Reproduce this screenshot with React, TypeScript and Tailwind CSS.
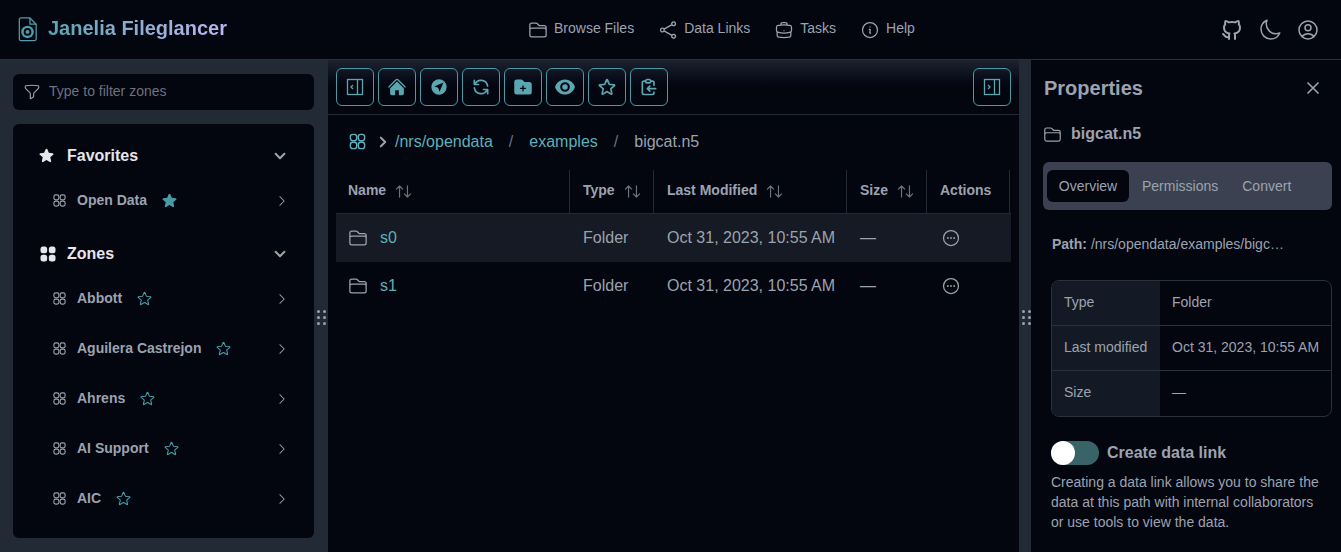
import {
  HiOutlineFolder,
  HiOutlineShare,
  HiOutlineBriefcase,
  HiOutlineInformationCircle,
  HiOutlineMoon,
  HiOutlineUserCircle,
  HiOutlineStar,
  HiStar,
  HiHome,
  HiFolderPlus,
  HiEye,
  HiChevronDown,
  HiChevronRight,
  HiOutlineFunnel,
  HiOutlineXMark,
  HiOutlineEllipsisHorizontalCircle,
} from 'react-icons/hi2'
import { HiOutlineClipboardCopy, HiOutlineRefresh } from 'react-icons/hi'
import { TbBrandGithub, TbArrowsSort } from 'react-icons/tb'

const zones = ['Abbott', 'Aguilera Castrejon', 'Ahrens', 'AI Support', 'AIC']

function GridIcon({ className, solid }: { className?: string; solid?: boolean }) {
  const props = solid
    ? { fill: 'currentColor' }
    : { fill: 'none', stroke: 'currentColor', strokeWidth: 1.8 }
  return (
    <svg viewBox="0 0 24 24" className={className} {...props}>
      <rect x="3" y="3" width="8" height="8" rx="3" />
      <rect x="13" y="3" width="8" height="8" rx="3" />
      <rect x="3" y="13" width="8" height="8" rx="3" />
      <rect x="13" y="13" width="8" height="8" rx="3" />
    </svg>
  )
}

function SidebarToggleIcon({ side }: { side: 'left' | 'right' }) {
  return (
    <svg viewBox="0 0 18 18" className="h-[18px] w-[18px]" fill="none" stroke="currentColor" strokeWidth="1.3">
      <rect x="1.5" y="1.5" width="15" height="15" />
      <path d="M11.5 1.5v15" />
      {side === 'left' ? <path d="M7 7l-2 2 2 2" /> : <path d="M5 7l2 2-2 2" />}
    </svg>
  )
}

function NavigateIcon() {
  return (
    <svg viewBox="0 0 20 20" className="h-[18px] w-[18px]" fill="currentColor">
      <path
        fillRule="evenodd"
        d="M10 1.5a8.500 8.500 0 1 0 0 17 8.500 8.500 0 0 0 0-17Zm5 3.500L4.800 9.400l4.300 1.500 1.500 4.300L15 5Z"
        clipRule="evenodd"
      />
    </svg>
  )
}

function Grip() {
  return (
    <div className="grid w-[9px] grid-cols-2 gap-x-[3px] gap-y-[3px]">
      {[0, 1, 2, 3, 4, 5].map((i) => (
        <span key={i} className="h-[3px] w-[3px] rounded-full bg-[#9ca3af]" />
      ))}
    </div>
  )
}

function ToolButton({ children }: { children: React.ReactNode }) {
  return (
    <button
      type="button"
      className="flex h-[38px] w-[38px] items-center justify-center rounded-md border border-[#4a9aa5] text-[#5aa7b2]"
    >
      {children}
    </button>
  )
}

function NavLink({ icon, label }: { icon: React.ReactNode; label: string }) {
  return (
    <a className="flex items-center gap-[6px] text-[14px] text-[#9ca3af]">
      <span className="text-[#9ca3af]">{icon}</span>
      <span className="-mt-[3px]">{label}</span>
    </a>
  )
}

function ZoneRow({ label, starred }: { label: string; starred?: boolean }) {
  return (
    <div className="flex h-[50px] items-center pl-[39px] pr-[25px]">
      <GridIcon className="h-[15px] w-[15px] text-[#9ca3af]" />
      <span className="ml-[10px] text-[14px] font-bold text-[#9ca3af]">{label}</span>
      {starred ? (
        <HiStar className="ml-[14px] h-[17px] w-[17px] text-[#4a9aa5]" />
      ) : (
        <HiOutlineStar className="ml-[14px] h-[17px] w-[17px] text-[#4a9aa5]" />
      )}
      <HiChevronRight className="ml-auto h-[14px] w-[14px] text-[#9ca3af]" />
    </div>
  )
}

function SectionRow({ icon, label }: { icon: React.ReactNode; label: string }) {
  return (
    <div className="flex h-[46px] items-center pl-[25px] pr-[27px]">
      {icon}
      <span className="text-[16px] font-bold text-[#e5e7eb]">{label}</span>
      <HiChevronDown className="ml-auto h-[14px] w-[14px] text-[#9ca3af]" strokeWidth={2} />
    </div>
  )
}

function HeaderCell({ label, width, pad, sort = true }: { label: string; width: string; pad: string; sort?: boolean }) {
  return (
    <div className={`flex h-[43px] items-center gap-2 border-r border-[#232a36] ${pad} ${width}`}>
      <span className="-mt-[3px] text-[14px] font-bold text-[#9ca3af]">{label}</span>
      {sort && <TbArrowsSort className="h-[19px] w-[19px] text-[#6b7280]" strokeWidth={1.5} />}
    </div>
  )
}

function FileRow({ name, active }: { name: string; active?: boolean }) {
  return (
    <div className={`flex h-[48px] items-center text-[16px] text-[#9ca3af] ${active ? 'bg-[#151a24]' : ''}`}>
      <div className="flex w-[234px] items-center gap-[12px] pl-[12px]">
        <HiOutlineFolder className="h-[20px] w-[20px]" />
        <span className="text-[#5fb0ba]">{name}</span>
      </div>
      <div className="w-[84px] pl-[13px]">Folder</div>
      <div className="w-[193px] pl-[13px]">Oct 31, 2023, 10:55 AM</div>
      <div className="w-[80px] pl-[13px]">—</div>
      <div className="pl-[14px]">
        <HiOutlineEllipsisHorizontalCircle className="h-[20px] w-[20px]" />
      </div>
    </div>
  )
}

function PropRow({ label, value, last }: { label: string; value: string; last?: boolean }) {
  return (
    <div className={`flex h-[45px] text-[14px] text-[#9ca3af] ${last ? '' : 'border-b border-[#2a303c]'}`}>
      <div className="flex w-[108px] items-center bg-[#141a25] pb-[2px] pl-[12px]">{label}</div>
      <div className="flex flex-1 items-center pb-[2px] pl-[12px]">{value}</div>
    </div>
  )
}

export default function App() {
  return (
    <div className="flex h-[552px] w-[1341px] flex-col overflow-hidden bg-[#03050f] font-['Liberation_Sans',sans-serif]">
      <header className="flex h-[60px] shrink-0 items-center border-b border-[#2a303c] pl-[18px] pr-[21px]">
        <div className="flex w-[510px] items-center gap-[10px]">
          <svg viewBox="0 0 20 26" className="h-[25px] w-[20px] text-[#4f9eaa]" fill="none" stroke="currentColor" strokeWidth="1.3">
            <path d="M2.500 1h9.500l6.500 6.500V23a1.500 1.500 0 0 1-1.500 1.500H2.500A1.500 1.500 0 0 1 1 23V2.500A1.500 1.500 0 0 1 2.500 1Z" />
            <path d="M12 1v6.500h6.500" />
            <circle cx="9.500" cy="15.500" r="6.500" fill="currentColor" stroke="none" />
            <circle cx="9.500" cy="15.500" r="4" fill="#03050f" stroke="none" />
            <circle cx="9.500" cy="15.500" r="2" fill="currentColor" stroke="none" />
          </svg>
          <span className="bg-gradient-to-r from-[#58a5b3] to-[#bdb6f2] bg-clip-text pb-[3px] text-[20px] font-bold text-transparent">
            Janelia Fileglancer
          </span>
        </div>
        <nav className="flex items-center gap-[24px]">
          <NavLink icon={<HiOutlineFolder className="h-5 w-5" />} label="Browse Files" />
          <NavLink icon={<HiOutlineShare className="h-5 w-5" />} label="Data Links" />
          <NavLink icon={<HiOutlineBriefcase className="h-5 w-5" />} label="Tasks" />
          <NavLink icon={<HiOutlineInformationCircle className="h-5 w-5" />} label="Help" />
        </nav>
        <div className="ml-auto flex items-center gap-[14px] text-[#9ca3af]">
          <TbBrandGithub className="h-[24px] w-[24px]" />
          <HiOutlineMoon className="h-[24px] w-[24px]" />
          <HiOutlineUserCircle className="h-[24px] w-[24px]" />
        </div>
      </header>

      <div className="flex min-h-0 flex-1">
        <aside className="relative flex w-[328px] shrink-0 flex-col gap-[14px] bg-[#222a36] py-[14px] pl-[13px] pr-[14px]">
          <div className="flex h-[36px] items-center gap-[8px] rounded-md bg-[#03050f] pl-[10px]">
            <HiOutlineFunnel className="h-[18px] w-[18px] text-[#9ca3af]" />
            <span className="-mt-[1px] text-[14px] text-[#6b7280]">Type to filter zones</span>
          </div>
          <div className="h-[416px] rounded-md bg-[#03050f] pt-[9px]">
            <SectionRow icon={<HiStar className="mr-[12px] h-[17px] w-[17px] text-[#e5e7eb]" />} label="Favorites" />
            <div className="-mt-[3px]">
              <ZoneRow label="Open Data" starred />
            </div>
            <div className="mt-[5px]">
              <SectionRow icon={<GridIcon solid className="mr-[9px] h-[20px] w-[20px] text-[#e5e7eb]" />} label="Zones" />
            </div>
            <div className="-mt-[3px]">
              {zones.map((z) => (
                <ZoneRow key={z} label={z} />
              ))}
            </div>
          </div>
          <div className="absolute right-[2px] top-[250px]">
            <Grip />
          </div>
        </aside>

        <main className="flex w-[691px] shrink-0 flex-col">
          <div className="flex h-[55px] shrink-0 items-center gap-1 border-b border-[#232a36] bg-gradient-to-b from-[#1c2330] via-[#03050f] to-[#03050f] pl-[8px] pr-[8px]">
            <ToolButton><SidebarToggleIcon side="left" /></ToolButton>
            <ToolButton><HiHome className="h-5 w-5" /></ToolButton>
            <ToolButton><NavigateIcon /></ToolButton>
            <ToolButton><HiOutlineRefresh className="h-5 w-5" /></ToolButton>
            <ToolButton><HiFolderPlus className="h-5 w-5" /></ToolButton>
            <ToolButton><HiEye className="h-[22px] w-[22px]" /></ToolButton>
            <ToolButton><HiOutlineStar className="h-5 w-5" strokeWidth={2} /></ToolButton>
            <ToolButton><HiOutlineClipboardCopy className="h-5 w-5" /></ToolButton>
            <div className="ml-auto">
              <ToolButton><SidebarToggleIcon side="right" /></ToolButton>
            </div>
          </div>
          <div className="flex h-[53px] shrink-0 items-center pl-[20px] text-[16px]">
            <GridIcon className="h-[19px] w-[19px] text-[#5fb0ba]" />
            <HiChevronRight className="ml-[9px] h-[14px] w-[14px] text-[#9ca3af]" strokeWidth={2} />
            <span className="ml-[5px] text-[#5fb0ba]">/nrs/opendata</span>
            <span className="mx-[16px] text-[#6b7280]">/</span>
            <span className="text-[#5fb0ba]">examples</span>
            <span className="mx-[16px] text-[#6b7280]">/</span>
            <span className="text-[#9ca3af]">bigcat.n5</span>
          </div>
          <div className="ml-[8px] mt-[2px] w-[675px] self-start">
            <div className="flex border-b border-[#232a36]">
              <HeaderCell label="Name" width="w-[234px]" pad="pl-[12px]" />
              <HeaderCell label="Type" width="w-[84px]" pad="pl-[13px]" />
              <HeaderCell label="Last Modified" width="w-[193px]" pad="pl-[13px]" />
              <HeaderCell label="Size" width="w-[80px]" pad="pl-[13px]" />
              <HeaderCell label="Actions" width="w-[83px]" pad="pl-[13px]" sort={false} />
            </div>
            <FileRow name="s0" active />
            <FileRow name="s1" />
          </div>
        </main>

        <div className="relative w-[12px] shrink-0 bg-[#222a36]">
          <div className="absolute left-[3px] top-[250px]">
            <Grip />
          </div>
        </div>

        <aside className="min-w-0 flex-1 pl-[12px] pr-[9px]">
          <div className="flex h-[56px] items-center justify-between pl-px pr-[9px]">
            <span className="text-[20px] font-bold text-[#9ca3af]">Properties</span>
            <HiOutlineXMark className="h-5 w-5 text-[#9ca3af]" strokeWidth={2} />
          </div>
          <div className="flex h-[36px] items-center gap-[9px]">
            <HiOutlineFolder className="h-[19px] w-[19px] text-[#9ca3af]" />
            <span className="text-[16px] font-bold text-[#9ca3af]">bigcat.n5</span>
          </div>
          <div className="mt-[10px] flex h-[48px] items-center rounded-md bg-[#3b4150] px-[4px] text-[14px] text-[#9ca3af]">
            <span className="flex h-[32px] w-[82px] items-center justify-center rounded-md bg-[#03050f]">Overview</span>
            <span className="ml-[13px]">Permissions</span>
            <span className="ml-[24px]">Convert</span>
          </div>
          <div className="ml-[9px] mt-[24px] truncate text-[14px] leading-5 text-[#9ca3af]">
            <span className="font-bold">Path:</span> /nrs/opendata/examples/bigc…
          </div>
          <div className="ml-[8px] mt-[26px] w-[281px] overflow-hidden rounded-lg border border-[#2a303c]">
            <PropRow label="Type" value="Folder" />
            <PropRow label="Last modified" value="Oct 31, 2023, 10:55 AM" />
            <PropRow label="Size" value="—" last />
          </div>
          <div className="ml-[8px] mt-[24px] flex items-center gap-[8px]">
            <span className="relative block h-[24px] w-[48px] rounded-full bg-[#386468]">
              <span className="absolute left-0 top-0 h-[24px] w-[24px] rounded-full bg-white" />
            </span>
            <span className="text-[16px] font-bold text-[#9ca3af]">Create data link</span>
          </div>
          <p className="ml-[8px] mt-[7px] pr-[8px] text-[14px] leading-5 text-[#9ca3af]">
            Creating a data link allows you to share the data at this path with internal collaborators or use tools to view the data.
          </p>
        </aside>
      </div>
    </div>
  )
}
